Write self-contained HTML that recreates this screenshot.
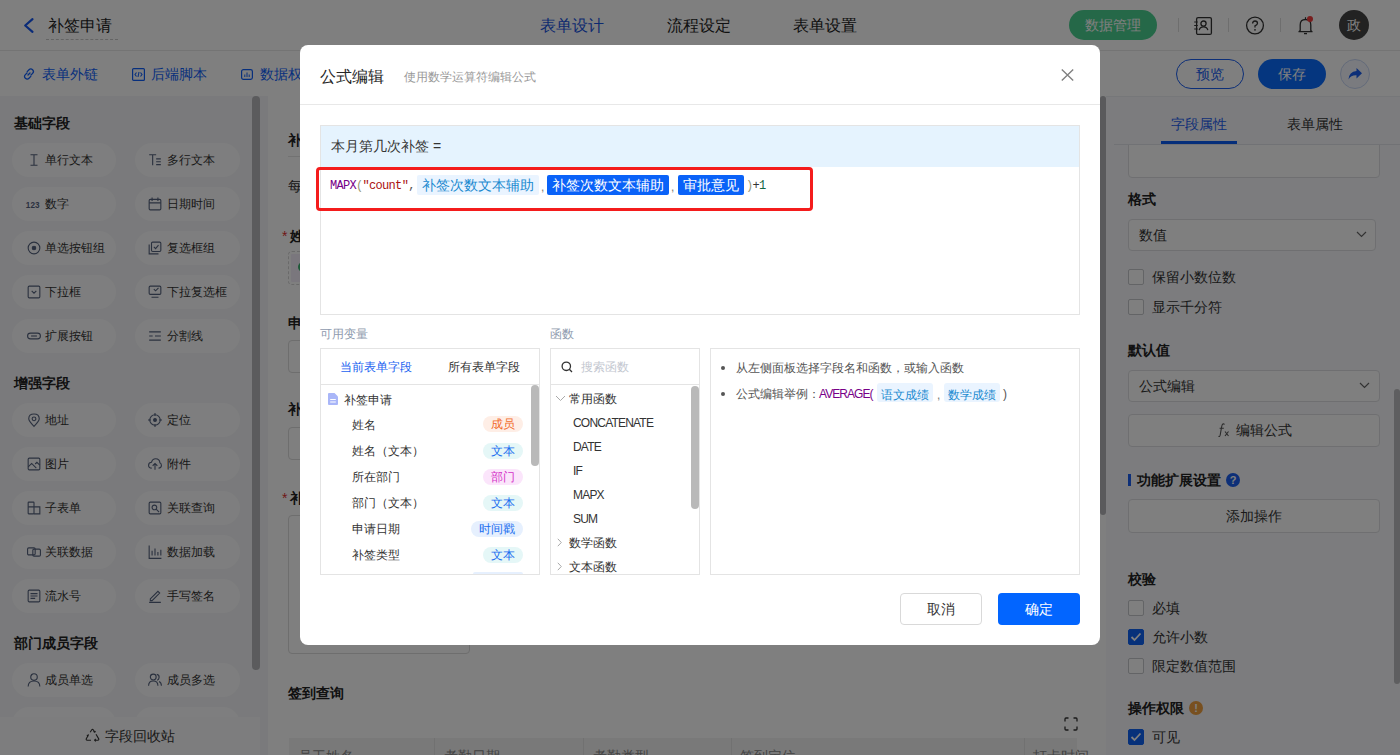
<!DOCTYPE html>
<html><head><meta charset="utf-8">
<style>
*{box-sizing:border-box;margin:0;padding:0}
html,body{width:1400px;height:755px;overflow:hidden;background:#fff}
body{position:relative;font-family:"Liberation Sans",sans-serif;color:#333;font-size:14px}
.a{position:absolute;white-space:nowrap}
.t{position:absolute;white-space:nowrap;line-height:20px}
svg{position:absolute;overflow:visible}
/* background */
#top{left:0;top:0;width:1400px;height:51px;background:#fff;border-bottom:1px solid #e8e8e8}
#bar{left:0;top:51px;width:1400px;height:45px;background:#fff}
#side{left:0;top:96px;width:268px;height:659px;background:#f4f5f8}
.pill{position:absolute;height:33px;border-radius:17px;background:#fdfdfe;width:104px}
.pill span{position:absolute;top:6px;line-height:20px;font-size:12px;color:#333}
.sec{position:absolute;left:14px;font-size:14px;font-weight:bold;line-height:20px;color:#222}
#canvas{left:268px;top:96px;width:832px;height:659px;background:#fff}
#right{left:1106px;top:96px;width:294px;height:659px;background:#f8f9fc}
.rl{position:absolute;font-size:14px;font-weight:bold;color:#222;line-height:20px;left:1128px}
.inp{position:absolute;left:1128px;width:252px;height:32px;border:1px solid #dedfe3;border-radius:4px;background:#fff}
.cb{position:absolute;left:1128px;width:16px;height:16px;border:1px solid #c6c8cc;border-radius:2px;background:#fff}
.cbl{position:absolute;left:1152px;font-size:14px;color:#333;line-height:20px}
#mask{left:0;top:0;width:1400px;height:755px;background:rgba(0,0,0,.5)}
/* modal */
#modal{left:300px;top:45px;width:800px;height:600px;background:#fff;border-radius:8px}
.badge{position:absolute;height:16px;border-radius:8px;font-size:12px;line-height:16px;text-align:center;left:483px;width:40px}
.vr{position:absolute;left:352px;font-size:12px;line-height:16px;color:#333}
.fn{position:absolute;left:573px;font-size:12px;line-height:16px;color:#333;letter-spacing:-0.8px}
</style></head><body>

<!-- ============ BACKGROUND ============ -->
<div class="a" id="top"></div>
<svg style="left:23px;top:18px" width="11" height="15" viewBox="0 0 11 15"><path d="M9.5 1.2 L2.2 7.5 L9.5 13.8" fill="none" stroke="#1456f0" stroke-width="2.2" stroke-linecap="round" stroke-linejoin="round"/></svg>
<div class="t" style="left:48px;top:15px;font-size:16px;line-height:22px;color:#222">补签申请</div>
<div class="a" style="left:46px;top:39px;width:72px;border-top:1px dashed #c8c8c8"></div>
<div class="t" style="left:540px;top:15px;font-size:16px;line-height:22px;color:#1a55e0">表单设计</div>
<div class="t" style="left:667px;top:15px;font-size:16px;line-height:22px;color:#222">流程设定</div>
<div class="t" style="left:793px;top:15px;font-size:16px;line-height:22px;color:#222">表单设置</div>
<div class="a" style="left:1069px;top:10px;width:88px;height:30px;border-radius:15px;background:#4bd091;color:#fff;font-size:14px;line-height:30px;text-align:center">数据管理</div>
<div class="a" style="left:1178px;top:18px;width:1px;height:14px;background:#ddd"></div>
<div class="a" style="left:1228px;top:18px;width:1px;height:14px;background:#ddd"></div>
<div class="a" style="left:1280px;top:18px;width:1px;height:14px;background:#ddd"></div>
<svg style="left:1193px;top:16px" width="20" height="20" viewBox="0 0 20 20"><rect x="3.6" y="1.6" width="14.8" height="16.8" rx="1.5" fill="none" stroke="#333" stroke-width="1.3"/><circle cx="10.5" cy="7.6" r="2.6" fill="none" stroke="#333" stroke-width="1.3"/><path d="M6.2 14.2 Q6.8 10.8 10.5 10.8 Q14.2 10.8 14.8 14.2" fill="none" stroke="#333" stroke-width="1.3"/><path d="M1.2 6h3.6M1.2 9.5h3.6M1.2 13h3.6" stroke="#333" stroke-width="1.2"/></svg>
<svg style="left:1245px;top:16px" width="20" height="20" viewBox="0 0 20 20"><circle cx="10" cy="9.5" r="8.4" fill="none" stroke="#333" stroke-width="1.3"/><path d="M7.6 7.6 Q7.6 5 10 5 Q12.5 5 12.5 7.3 Q12.5 8.8 10 9.8 L10 11.6" fill="none" stroke="#333" stroke-width="1.3"/><circle cx="10" cy="13.8" r="0.85" fill="#333"/></svg>
<svg style="left:1295px;top:14px" width="20" height="22" viewBox="0 0 20 22"><path d="M5.2 16.5 L5.2 11 Q5.2 5.5 10.5 5.5 Q15.8 5.5 15.8 11 L15.8 16.5 L17 17.7 L4 17.7 Z" fill="none" stroke="#333" stroke-width="1.3" stroke-linejoin="round"/><path d="M10.5 3.2v2" stroke="#333" stroke-width="1.2"/><path d="M9 19.6h3" stroke="#333" stroke-width="1.3"/><circle cx="15" cy="5" r="3" fill="#f03c3c"/></svg>
<div class="a" style="left:1339px;top:10px;width:30px;height:30px;border-radius:15px;background:#444;color:#fff;font-size:14px;line-height:30px;text-align:center">政</div>

<div class="a" id="bar"></div>
<svg style="left:22px;top:67px" width="14" height="14" viewBox="0 0 14 14"><path d="M6 8 L8 6 M5.2 4.6 L7 2.8 Q8.8 1 10.6 2.8 Q12.4 4.6 10.6 6.4 L9 8 M8.8 9.4 L7 11.2 Q5.2 13 3.4 11.2 Q1.6 9.4 3.4 7.6 L5 6" fill="none" stroke="#0f5ffa" stroke-width="1.3" stroke-linecap="round"/></svg>
<div class="t" style="left:42px;top:64px;color:#0f5ffa">表单外链</div>
<svg style="left:132px;top:68px" width="13" height="13" viewBox="0 0 13 13"><rect x="0.6" y="0.6" width="11.8" height="11.8" rx="1" fill="none" stroke="#0f5ffa" stroke-width="1.2"/><path d="M4.5 4.5 L3 6.5 L4.5 8.5 M8.5 4.5 L10 6.5 L8.5 8.5 M7 4 L6 9" fill="none" stroke="#0f5ffa" stroke-width="1.1"/></svg>
<div class="t" style="left:151px;top:64px;color:#0f5ffa">后端脚本</div>
<svg style="left:241px;top:69px" width="12" height="11" viewBox="0 0 12 11"><rect x="0.6" y="0.6" width="10.8" height="9.8" rx="1.8" fill="none" stroke="#0f5ffa" stroke-width="1.2"/><path d="M3.8 8V5.5 M6 8V3.5 M8.2 8V5.5" stroke="#0f5ffa" stroke-width="1"/></svg>
<div class="t" style="left:260px;top:64px;color:#0f5ffa">数据权限</div>
<div class="a" style="left:1176px;top:59px;width:68px;height:30px;border-radius:15px;border:1px solid #1a5ef0;color:#1a5ef0;font-size:14px;line-height:28px;text-align:center">预览</div>
<div class="a" style="left:1258px;top:59px;width:68px;height:30px;border-radius:15px;background:#0a6cff;color:#fff;font-size:14px;line-height:30px;text-align:center">保存</div>
<div class="a" style="left:1340px;top:59px;width:30px;height:30px;border-radius:15px;border:1px solid #c8d6f4;background:#f4f7fe"></div>
<svg style="left:1347px;top:66px" width="16" height="16" viewBox="0 0 16 16"><path d="M9.5 2 L15 7.2 L9.5 12.4 L9.5 9.3 Q4 9 1.5 13.5 Q2 5.5 9.5 5 Z" fill="#1a5ef0"/></svg>
<div class="a" id="side"></div>
<div class="sec" style="top:113px">基础字段</div>
<div class="pill" style="left:12px;top:143px;height:34px;width:104px"></div>
<svg style="left:27px;top:153px" width="14" height="14" viewBox="0 0 12 12" fill="none" stroke="#55627e" stroke-width="0.95"><path d="M3 1.5h6M6 1.5v9M3 10.5h6"/></svg>
<div class="t" style="left:45px;top:150px;font-size:12px;color:#333">单行文本</div>
<div class="pill" style="left:135px;top:143px;height:34px;width:105px"></div>
<svg style="left:148px;top:153px" width="14" height="14" viewBox="0 0 12 12" fill="none" stroke="#55627e" stroke-width="0.95"><path d="M1 1.5h6M4 1.5v9M7 5h4M7 7.5h4M7 10h4"/></svg>
<div class="t" style="left:167px;top:150px;font-size:12px;color:#333">多行文本</div>
<div class="pill" style="left:12px;top:187px;height:34px;width:104px"></div>
<svg style="left:27px;top:197px" width="14" height="14" viewBox="0 0 12 12" fill="none" stroke="#55627e" stroke-width="0.95"><text x="-1" y="9" font-size="7" fill="#55627e" stroke="none" font-family="Liberation Sans" font-weight="bold">123</text></svg>
<div class="t" style="left:45px;top:194px;font-size:12px;color:#333">数字</div>
<div class="pill" style="left:135px;top:187px;height:34px;width:105px"></div>
<svg style="left:148px;top:197px" width="14" height="14" viewBox="0 0 12 12" fill="none" stroke="#55627e" stroke-width="0.95"><rect x="1" y="2" width="10" height="9" rx="1"/><path d="M1 5h10M3.5 0.5v3M8.5 0.5v3"/></svg>
<div class="t" style="left:167px;top:194px;font-size:12px;color:#333">日期时间</div>
<div class="pill" style="left:12px;top:231px;height:34px;width:104px"></div>
<svg style="left:27px;top:241px" width="14" height="14" viewBox="0 0 12 12" fill="none" stroke="#55627e" stroke-width="0.95"><circle cx="6" cy="6" r="5"/><circle cx="6" cy="6" r="1.5" fill="#55627e"/></svg>
<div class="t" style="left:45px;top:238px;font-size:12px;color:#333">单选按钮组</div>
<div class="pill" style="left:135px;top:231px;height:34px;width:105px"></div>
<svg style="left:148px;top:241px" width="14" height="14" viewBox="0 0 12 12" fill="none" stroke="#55627e" stroke-width="0.95"><path d="M1 3v8h8"/><rect x="3" y="1" width="8" height="8" rx="1"/><path d="M5 5l1.5 1.5L9 3.5"/></svg>
<div class="t" style="left:167px;top:238px;font-size:12px;color:#333">复选框组</div>
<div class="pill" style="left:12px;top:275px;height:34px;width:104px"></div>
<svg style="left:27px;top:285px" width="14" height="14" viewBox="0 0 12 12" fill="none" stroke="#55627e" stroke-width="0.95"><rect x="1" y="1" width="10" height="10" rx="1"/><path d="M4 5l2 2l2-2"/></svg>
<div class="t" style="left:45px;top:282px;font-size:12px;color:#333">下拉框</div>
<div class="pill" style="left:135px;top:275px;height:34px;width:105px"></div>
<svg style="left:148px;top:285px" width="14" height="14" viewBox="0 0 12 12" fill="none" stroke="#55627e" stroke-width="0.95"><rect x="1" y="1" width="10" height="7" rx="1"/><path d="M3 10.5h6M5 3.5l1.5 1.5L9 2.5"/></svg>
<div class="t" style="left:167px;top:282px;font-size:12px;color:#333">下拉复选框</div>
<div class="pill" style="left:12px;top:319px;height:34px;width:104px"></div>
<svg style="left:27px;top:329px" width="14" height="14" viewBox="0 0 12 12" fill="none" stroke="#55627e" stroke-width="0.95"><rect x="0.5" y="3.5" width="11" height="5" rx="2.5"/><path d="M3.5 6h5"/></svg>
<div class="t" style="left:45px;top:326px;font-size:12px;color:#333">扩展按钮</div>
<div class="pill" style="left:135px;top:319px;height:34px;width:105px"></div>
<svg style="left:148px;top:329px" width="14" height="14" viewBox="0 0 12 12" fill="none" stroke="#55627e" stroke-width="0.95"><path d="M1 2.5h10M1 6h3M6 6h5M1 9.5h10"/></svg>
<div class="t" style="left:167px;top:326px;font-size:12px;color:#333">分割线</div>
<div class="sec" style="top:373px">增强字段</div>
<div class="pill" style="left:12px;top:403px;height:34px;width:104px"></div>
<svg style="left:27px;top:413px" width="14" height="14" viewBox="0 0 12 12" fill="none" stroke="#55627e" stroke-width="0.95"><path d="M6 11.5Q1.5 7 1.5 5Q1.5 0.8 6 0.8Q10.5 0.8 10.5 5Q10.5 7 6 11.5Z"/><circle cx="6" cy="5" r="1.6"/></svg>
<div class="t" style="left:45px;top:410px;font-size:12px;color:#333">地址</div>
<div class="pill" style="left:135px;top:403px;height:34px;width:105px"></div>
<svg style="left:148px;top:413px" width="14" height="14" viewBox="0 0 12 12" fill="none" stroke="#55627e" stroke-width="0.95"><circle cx="6" cy="6" r="4.5"/><circle cx="6" cy="6" r="1.2" fill="#55627e"/><path d="M6 0v2.5M6 9.5V12M0 6h2.5M9.5 6H12"/></svg>
<div class="t" style="left:167px;top:410px;font-size:12px;color:#333">定位</div>
<div class="pill" style="left:12px;top:447px;height:34px;width:104px"></div>
<svg style="left:27px;top:457px" width="14" height="14" viewBox="0 0 12 12" fill="none" stroke="#55627e" stroke-width="0.95"><rect x="1" y="1" width="10" height="10" rx="1"/><path d="M1 8.5l3-3l4 4M7 6l1.5-1.5l2.5 2.5"/></svg>
<div class="t" style="left:45px;top:454px;font-size:12px;color:#333">图片</div>
<div class="pill" style="left:135px;top:447px;height:34px;width:105px"></div>
<svg style="left:148px;top:457px" width="14" height="14" viewBox="0 0 12 12" fill="none" stroke="#55627e" stroke-width="0.95"><path d="M3.2 9.5Q0.5 9.5 0.5 7Q0.5 4.6 3 4.5Q3.8 1.5 6.5 1.5Q10 1.5 10.2 5Q11.5 5.5 11.5 7.3Q11.5 9.5 9 9.5M6 11V5.5M4 7.5l2-2l2 2"/></svg>
<div class="t" style="left:167px;top:454px;font-size:12px;color:#333">附件</div>
<div class="pill" style="left:12px;top:491px;height:34px;width:104px"></div>
<svg style="left:27px;top:501px" width="14" height="14" viewBox="0 0 12 12" fill="none" stroke="#55627e" stroke-width="0.95"><rect x="1" y="1" width="5" height="10" rx="0.5"/><path d="M6 5h5v6H6M1 5h5"/></svg>
<div class="t" style="left:45px;top:498px;font-size:12px;color:#333">子表单</div>
<div class="pill" style="left:135px;top:491px;height:34px;width:105px"></div>
<svg style="left:148px;top:501px" width="14" height="14" viewBox="0 0 12 12" fill="none" stroke="#55627e" stroke-width="0.95"><rect x="1" y="1" width="10" height="10" rx="1"/><circle cx="5.5" cy="5.5" r="2"/><path d="M7 7l2.5 2.5"/></svg>
<div class="t" style="left:167px;top:498px;font-size:12px;color:#333">关联查询</div>
<div class="pill" style="left:12px;top:535px;height:34px;width:104px"></div>
<svg style="left:27px;top:545px" width="14" height="14" viewBox="0 0 12 12" fill="none" stroke="#55627e" stroke-width="0.95"><rect x="0.5" y="2.5" width="6.5" height="6" rx="1"/><rect x="5" y="3.5" width="6.5" height="6" rx="1"/></svg>
<div class="t" style="left:45px;top:542px;font-size:12px;color:#333">关联数据</div>
<div class="pill" style="left:135px;top:535px;height:34px;width:105px"></div>
<svg style="left:148px;top:545px" width="14" height="14" viewBox="0 0 12 12" fill="none" stroke="#55627e" stroke-width="0.95"><path d="M1 0.5v11h10.5M3.5 9V5M6 9V3M8.5 9V6M11 9V4"/></svg>
<div class="t" style="left:167px;top:542px;font-size:12px;color:#333">数据加载</div>
<div class="pill" style="left:12px;top:579px;height:34px;width:104px"></div>
<svg style="left:27px;top:589px" width="14" height="14" viewBox="0 0 12 12" fill="none" stroke="#55627e" stroke-width="0.95"><rect x="1" y="1" width="10" height="10" rx="1"/><path d="M3 4h6M3 6h6M3 8h4"/></svg>
<div class="t" style="left:45px;top:586px;font-size:12px;color:#333">流水号</div>
<div class="pill" style="left:135px;top:579px;height:34px;width:105px"></div>
<svg style="left:148px;top:589px" width="14" height="14" viewBox="0 0 12 12" fill="none" stroke="#55627e" stroke-width="0.95"><path d="M2 8.5L8.5 2L10 3.5L3.5 10H2ZM1 11.5h10"/></svg>
<div class="t" style="left:167px;top:586px;font-size:12px;color:#333">手写签名</div>
<div class="sec" style="top:633px">部门成员字段</div>
<div class="pill" style="left:12px;top:663px;height:34px;width:104px"></div>
<svg style="left:27px;top:673px" width="14" height="14" viewBox="0 0 12 12" fill="none" stroke="#55627e" stroke-width="0.95"><circle cx="6" cy="3.5" r="2.8"/><path d="M1 11.5Q1 6.8 6 6.8Q11 6.8 11 11.5"/></svg>
<div class="t" style="left:45px;top:670px;font-size:12px;color:#333">成员单选</div>
<div class="pill" style="left:135px;top:663px;height:34px;width:105px"></div>
<svg style="left:148px;top:673px" width="14" height="14" viewBox="0 0 12 12" fill="none" stroke="#55627e" stroke-width="0.95"><circle cx="4.5" cy="3.5" r="2.5"/><path d="M0.5 11Q0.5 6.8 4.5 6.8Q8.5 6.8 8.5 11M7.5 1.2Q9.8 1.5 9.5 4Q9.3 5.8 7.8 6.2M9.5 7.2Q11.5 8 11.5 11"/></svg>
<div class="t" style="left:167px;top:670px;font-size:12px;color:#333">成员多选</div>
<div class="pill" style="left:12px;top:707px;height:34px;width:104px"></div>
<svg style="left:27px;top:717px" width="14" height="14" viewBox="0 0 12 12" fill="none" stroke="#55627e" stroke-width="0.95"><rect x="4" y="0.5" width="4" height="3.5"/><path d="M6 4v3M2 7h8M2 7v2M10 7v2"/></svg>
<div class="t" style="left:45px;top:714px;font-size:12px;color:#333">部门单选</div>
<div class="pill" style="left:135px;top:707px;height:34px;width:105px"></div>
<svg style="left:148px;top:717px" width="14" height="14" viewBox="0 0 12 12" fill="none" stroke="#55627e" stroke-width="0.95"><rect x="4" y="0.5" width="4" height="3.5"/><path d="M6 4v3M2 7h8M2 7v2M10 7v2"/></svg>
<div class="t" style="left:167px;top:714px;font-size:12px;color:#333">部门多选</div>
<div class="a" style="left:252px;top:96px;width:8px;height:574px;border-radius:4px;background:#b6b7ba"></div>
<div class="a" style="left:260px;top:96px;width:8px;height:659px;background:#f4f5f8"></div>
<div class="a" style="left:0;top:717px;width:260px;height:38px;background:#fbfbfc"></div>
<svg style="left:85px;top:729px" width="15" height="13" viewBox="0 0 15 13" fill="none" stroke="#333" stroke-width="1.1" stroke-linejoin="round"><path d="M5.2 3.2L6.6 1Q7.5 -0.2 8.4 1L9.6 3"/><path d="M8.6 2.6L9.8 3.2L10.4 2"/><path d="M11 5.2L13.6 9.6Q14.3 11 12.8 11.2H9.8"/><path d="M10.8 10L9.6 11.2L10.8 12.4"/><path d="M6 11.2H2.2Q0.7 11 1.4 9.6L3 6.8"/><path d="M1.8 6.4L3.1 6.6L3.5 5.3"/></svg>
<div class="t" style="left:105px;top:726px;font-size:14px;color:#333">字段回收站</div>

<div class="a" id="canvas"></div>
<div class="t" style="left:288px;top:130px;font-weight:bold;color:#222">补签申请表单</div>
<div class="a" style="left:288px;top:156px;width:792px;height:1px;background:#e4e4e4"></div>
<div class="t" style="left:288px;top:176px;color:#333">每月补签次数不得超过三次</div>
<div class="t" style="left:282px;top:226px;color:#e03030">*</div>
<div class="t" style="left:290px;top:226px;font-weight:bold;color:#222">姓名</div>
<div class="a" style="left:288px;top:251px;width:180px;height:34px;border:1px dashed #d4d4d4;border-radius:4px"></div>
<div class="a" style="left:291px;top:254px;width:120px;height:28px;border-radius:1px;background:#f4eefb"></div>
<div class="a" style="left:298px;top:262px;width:10px;height:10px;border-radius:5px;background:#3cb371"></div>
<div class="t" style="left:288px;top:313px;font-weight:bold;color:#222">申请日期</div>
<div class="a" style="left:288px;top:340px;width:182px;height:33px;border:1px solid #dcdcdc;border-radius:4px"></div>
<div class="a" style="left:300px;top:355px;width:3px;height:3px;background:#e0a040"></div>
<div class="t" style="left:288px;top:399px;font-weight:bold;color:#222">补签类型</div>
<div class="a" style="left:288px;top:427px;width:182px;height:33px;border:1px solid #dcdcdc;border-radius:4px"></div>
<div class="t" style="left:282px;top:488px;color:#e03030">*</div>
<div class="t" style="left:290px;top:488px;font-weight:bold;color:#222">补签原因</div>
<div class="a" style="left:288px;top:515px;width:182px;height:139px;border:1px solid #dcdcdc;border-radius:4px"></div>
<div class="t" style="left:288px;top:683px;font-weight:bold;color:#222">签到查询</div>
<svg style="left:1064px;top:717px" width="14" height="14" viewBox="0 0 14 14" fill="none" stroke="#333" stroke-width="1.3"><path d="M1 4.5V2Q1 1 2 1H4.5M9.5 1H12Q13 1 13 2V4.5M13 9.5V12Q13 13 12 13H9.5M4.5 13H2Q1 13 1 12V9.5"/></svg>
<div class="a" style="left:289px;top:738px;width:788px;height:30px;background:#f3f3f3"></div>
<div class="a" style="left:434px;top:738px;width:1px;height:30px;background:#e2e2e2"></div>
<div class="a" style="left:583px;top:738px;width:1px;height:30px;background:#e2e2e2"></div>
<div class="a" style="left:731px;top:738px;width:1px;height:30px;background:#e2e2e2"></div>
<div class="a" style="left:1024px;top:738px;width:1px;height:30px;background:#e2e2e2"></div>
<div class="t" style="left:298px;top:746px;color:#888">员工姓名</div>
<div class="t" style="left:444px;top:746px;color:#888">考勤日期</div>
<div class="t" style="left:593px;top:746px;color:#888">考勤类型</div>
<div class="t" style="left:740px;top:746px;color:#888">签到定位</div>
<div class="t" style="left:1033px;top:746px;color:#888">打卡时间</div>
<div class="a" style="left:1100px;top:96px;width:6px;height:419px;border-radius:3px;background:#b4b5b8"></div>
<div class="a" id="right"></div>
<div class="inp" style="top:130px;height:48px"></div>
<div class="a" style="left:1106px;top:96px;width:294px;height:49px;background:#f8f9fc;border-top:1px solid #eceef2"></div>
<div class="a" style="left:1114px;top:144px;width:286px;height:1px;background:#e3e5ea"></div>
<div class="t" style="left:1171px;top:114px;color:#1f5ff0">字段属性</div>
<div class="t" style="left:1287px;top:114px;color:#333">表单属性</div>
<div class="a" style="left:1161px;top:141px;width:76px;height:3px;background:#0a5cf5"></div>
<div class="rl" style="top:189px">格式</div>
<div class="inp" style="top:219px;width:248px"></div>
<div class="t" style="left:1139px;top:225px;color:#333">数值</div>
<svg style="left:1356px;top:231px" width="11" height="7" viewBox="0 0 11 7"><path d="M1 1l4.5 4.5L10 1" fill="none" stroke="#666" stroke-width="1.2"/></svg>
<div class="cb" style="top:269px"></div><div class="cbl" style="top:267px">保留小数位数</div>
<div class="cb" style="top:299px"></div><div class="cbl" style="top:297px">显示千分符</div>
<div class="rl" style="top:340px">默认值</div>
<div class="inp" style="top:370px"></div>
<div class="t" style="left:1139px;top:376px;color:#333">公式编辑</div>
<svg style="left:1359px;top:382px" width="11" height="7" viewBox="0 0 11 7"><path d="M1 1l4.5 4.5L10 1" fill="none" stroke="#666" stroke-width="1.2"/></svg>
<div class="inp" style="top:414px;height:33px"></div>
<svg style="left:1217px;top:422px" width="14" height="16" viewBox="0 0 14 16"><path d="M7.5 2.5Q6.8 1.5 5.8 2Q5 2.5 4.6 5L3.2 13Q2.8 15 1.5 14.3M2.6 6.2H6.8" fill="none" stroke="#555" stroke-width="1.1"/><path d="M8 9.5L11.5 14M11.5 9.5L8 14" stroke="#555" stroke-width="1.1"/></svg>
<div class="t" style="left:1236px;top:420px;color:#333">编辑公式</div>
<div class="a" style="left:1128px;top:474px;width:3px;height:12px;background:#1a5ef0"></div>
<div class="rl" style="left:1137px;top:470px">功能扩展设置</div>
<div class="a" style="left:1226px;top:473px;width:14px;height:14px;border-radius:7px;background:#1a5ef0;color:#fff;font-size:11px;line-height:14px;text-align:center;font-weight:bold">?</div>
<div class="inp" style="top:499px;height:34px"></div>
<div class="t" style="left:1226px;top:506px;color:#333">添加操作</div>
<div class="rl" style="top:569px">校验</div>
<div class="cb" style="top:600px"></div><div class="cbl" style="top:598px">必填</div>
<div class="cb" style="top:629px;background:#0e62f5;border-color:#0e62f5"></div>
<svg style="left:1130px;top:632px" width="12" height="10" viewBox="0 0 12 10"><path d="M1.5 5l3 3l6-6.5" fill="none" stroke="#fff" stroke-width="1.8"/></svg>
<div class="cbl" style="top:627px">允许小数</div>
<div class="cb" style="top:658px"></div><div class="cbl" style="top:656px">限定数值范围</div>
<div class="rl" style="top:698px">操作权限</div>
<div class="a" style="left:1189px;top:701px;width:14px;height:14px;border-radius:7px;background:#f0a040;color:#fff;font-size:11px;line-height:14px;text-align:center;font-weight:bold">!</div>
<div class="cb" style="top:729px;background:#0e62f5;border-color:#0e62f5"></div>
<svg style="left:1130px;top:732px" width="12" height="10" viewBox="0 0 12 10"><path d="M1.5 5l3 3l6-6.5" fill="none" stroke="#fff" stroke-width="1.8"/></svg>
<div class="cbl" style="top:727px">可见</div>
<div class="a" style="left:1394px;top:389px;width:6px;height:295px;border-radius:3px;background:#bcbdc0"></div>

<!-- ============ MASK ============ -->
<div class="a" id="mask"></div>

<!-- ============ MODAL ============ -->
<div class="a" id="modal"></div>
<div class="t" style="left:320px;top:66px;font-size:16px;line-height:22px;color:#262626">公式编辑</div>
<div class="t" style="left:404px;top:68px;font-size:12px;line-height:18px;color:#999">使用数学运算符编辑公式</div>
<svg style="left:1061px;top:69px" width="13" height="12" viewBox="0 0 13 12"><path d="M0.8 0.5L12.2 11.5M12.2 0.5L0.8 11.5" fill="none" stroke="#808080" stroke-width="1.4"/></svg>
<div class="a" style="left:300px;top:104px;width:800px;height:1px;background:#e8e8e8"></div>
<!-- formula editor -->
<div class="a" style="left:320px;top:125px;width:760px;height:190px;border:1px solid #e4e4e4"></div>
<div class="a" style="left:321px;top:126px;width:758px;height:41px;background:#e5f3fe"></div>
<div class="t" style="left:331px;top:136px;color:#333">本月第几次补签 =</div>
<div class="t" style="left:330px;top:176px;font-family:'Liberation Mono',monospace;font-size:12px;letter-spacing:-0.69px"><span style="color:#708">MAPX</span><span style="color:#997">(</span><span style="color:#a11">"count"</span><span style="color:#555">,</span></div>
<div class="a" style="left:417px;top:175px;width:122px;height:20px;border-radius:2px;background:#eaf4ff;color:#1a8ad0;font-size:14px;line-height:20px;text-align:center">补签次数文本辅助</div>
<div class="t" style="left:541px;top:177px;color:#777;font-size:12px">,</div>
<div class="a" style="left:547px;top:175px;width:122px;height:20px;border-radius:2px;background:#0a62f8;color:#fff;font-size:14px;line-height:20px;text-align:center">补签次数文本辅助</div>
<div class="t" style="left:671px;top:177px;color:#777;font-size:12px">,</div>
<div class="a" style="left:678px;top:175px;width:66px;height:20px;border-radius:2px;background:#0a62f8;color:#fff;font-size:14px;line-height:20px;text-align:center">审批意见</div>
<div class="t" style="left:746px;top:176px;font-family:'Liberation Mono',monospace;font-size:12px;letter-spacing:-0.69px"><span style="color:#997">)</span><span style="color:#333">+</span><span style="color:#164">1</span></div>
<div class="a" style="left:316px;top:167px;width:497px;height:44px;border:3px solid #f41c1c;border-radius:4px"></div>
<!-- labels -->
<div class="t" style="left:320px;top:325px;font-size:12px;line-height:18px;color:#8e9aae">可用变量</div>
<div class="t" style="left:550px;top:325px;font-size:12px;line-height:18px;color:#8e9aae">函数</div>
<!-- variables panel -->
<div class="a" style="left:320px;top:348px;width:220px;height:227px;border:1px solid #e4e4e4"></div>
<div class="a" style="left:321px;top:384px;width:218px;height:1px;background:#e4e4e4"></div>
<div class="t" style="left:340px;top:358px;font-size:12px;line-height:18px;color:#1a62f0">当前表单字段</div>
<div class="t" style="left:448px;top:358px;font-size:12px;line-height:18px;color:#333">所有表单字段</div>
<svg style="left:328px;top:393px" width="10" height="12" viewBox="0 0 10 12"><path d="M0 1Q0 0 1 0H6.5L10 3.5V11Q10 12 9 12H1Q0 12 0 11Z" fill="#a9b6f8"/><path d="M2.2 6.5h5.6M2.2 9h5.6" stroke="#fff" stroke-width="1"/></svg>
<div class="vr" style="left:344px;top:392px">补签申请</div>
<div class="vr" style="top:417px">姓名</div>
<div class="vr" style="top:443px">姓名（文本）</div>
<div class="vr" style="top:469px">所在部门</div>
<div class="vr" style="top:495px">部门（文本）</div>
<div class="vr" style="top:521px">申请日期</div>
<div class="vr" style="top:547px">补签类型</div>
<div class="badge" style="top:416px;background:#feeee6;color:#f26b2a">成员</div>
<div class="badge" style="top:443px;background:#e5f7f7;color:#1c6ff0">文本</div>
<div class="badge" style="top:469px;background:#fbe5fb;color:#d532c8">部门</div>
<div class="badge" style="top:495px;background:#e5f7f7;color:#1c6ff0">文本</div>
<div class="badge" style="top:521px;left:471px;width:52px;background:#e6f0fe;color:#1c6ff0">时间戳</div>
<div class="badge" style="top:547px;background:#e5f7f7;color:#1c6ff0">文本</div>
<div class="a" style="left:473px;top:572px;width:50px;height:2px;border-radius:8px 8px 0 0;background:#e6f0fe"></div>
<div class="a" style="left:531px;top:385px;width:8px;height:81px;border-radius:4px;background:#b9b9b9"></div>
<!-- functions panel -->
<div class="a" style="left:550px;top:348px;width:150px;height:227px;border:1px solid #e4e4e4"></div>
<div class="a" style="left:551px;top:384px;width:148px;height:1px;background:#e4e4e4"></div>
<svg style="left:561px;top:361px" width="12" height="12" viewBox="0 0 12 12"><circle cx="5.3" cy="5.3" r="4.2" fill="none" stroke="#333" stroke-width="1.3"/><path d="M8.3 8.3L11 11" stroke="#333" stroke-width="1.3"/></svg>
<div class="t" style="left:581px;top:358px;font-size:12px;line-height:18px;color:#c3c7d0">搜索函数</div>
<svg style="left:555px;top:395px" width="11" height="7" viewBox="0 0 11 7"><path d="M1 1l4.5 4.5L10 1" fill="none" stroke="#aaa" stroke-width="1"/></svg>
<div class="t" style="left:569px;top:390px;font-size:12px;line-height:18px;color:#333">常用函数</div>
<div class="fn" style="top:415px">CONCATENATE</div>
<div class="fn" style="top:439px">DATE</div>
<div class="fn" style="top:463px">IF</div>
<div class="fn" style="top:487px">MAPX</div>
<div class="fn" style="top:511px">SUM</div>
<svg style="left:557px;top:538px" width="5" height="9" viewBox="0 0 5 9"><path d="M0.8 0.8l3.5 3.7L0.8 8.2" fill="none" stroke="#aaa" stroke-width="1"/></svg>
<div class="t" style="left:569px;top:534px;font-size:12px;line-height:18px;color:#333">数学函数</div>
<svg style="left:557px;top:562px" width="5" height="9" viewBox="0 0 5 9"><path d="M0.8 0.8l3.5 3.7L0.8 8.2" fill="none" stroke="#aaa" stroke-width="1"/></svg>
<div class="a" style="left:551px;top:558px;width:140px;height:16px;overflow:hidden"><div class="t" style="left:18px;top:0px;font-size:12px;line-height:18px;color:#333">文本函数</div></div>
<div class="a" style="left:691px;top:386px;width:8px;height:123px;border-radius:4px;background:#b9b9b9"></div>
<!-- description panel -->
<div class="a" style="left:710px;top:348px;width:370px;height:227px;border:1px solid #e4e4e4"></div>
<div class="a" style="left:721px;top:366px;width:4px;height:4px;border-radius:2px;background:#555"></div>
<div class="t" style="left:736px;top:359px;font-size:12px;line-height:18px;color:#555">从左侧面板选择字段名和函数，或输入函数</div>
<div class="a" style="left:721px;top:392px;width:4px;height:4px;border-radius:2px;background:#555"></div>
<div class="t" style="left:736px;top:385px;font-size:12px;line-height:18px;color:#555">公式编辑举例：</div>
<div class="t" style="left:819px;top:385px;font-size:12px;line-height:18px;color:#708;letter-spacing:-0.95px">AVERAGE(</div>
<div class="a" style="left:877px;top:383px;width:56px;height:19px;border-radius:3px;background:#eaf4ff;color:#1a8ad0;font-size:12px;line-height:24px;text-align:center">语文成绩</div>
<div class="t" style="left:937px;top:386px;font-size:12px;line-height:18px;color:#777">,</div>
<div class="a" style="left:944px;top:383px;width:56px;height:19px;border-radius:3px;background:#eaf4ff;color:#1a8ad0;font-size:12px;line-height:24px;text-align:center">数学成绩</div>
<div class="t" style="left:1003px;top:385px;font-size:12px;line-height:18px;color:#555">)</div>
<!-- footer -->
<div class="a" style="left:900px;top:593px;width:82px;height:32px;border:1px solid #d9d9d9;border-radius:4px;color:#333;font-size:14px;line-height:30px;text-align:center">取消</div>
<div class="a" style="left:998px;top:593px;width:82px;height:32px;border-radius:4px;background:#0265ff;color:#fff;font-size:14px;line-height:32px;text-align:center">确定</div>

</body></html>
